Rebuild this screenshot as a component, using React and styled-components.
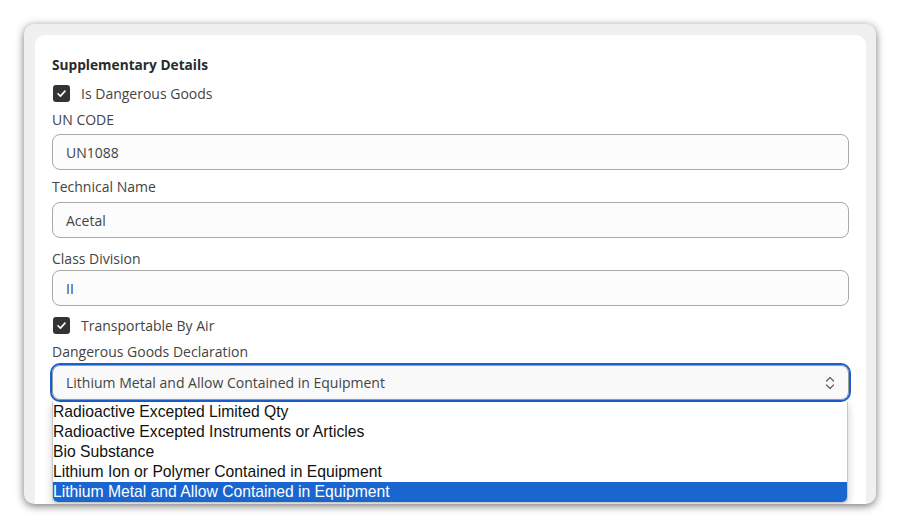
import React from "react";
import styled, { createGlobalStyle } from "styled-components";

const Global = createGlobalStyle`
  html, body { margin: 0; padding: 0; background: #ffffff; }
  body { font-family: "Open Sans", "Noto Sans", sans-serif; color: #333; }
`;

const Page = styled.div`
  width: 900px;
  height: 530px;
  padding: 24px 24px 0 24px;
  box-sizing: border-box;
`;

const Frame = styled.div`
  width: 852px;
  height: 480px;
  background: #f0f0f0;
  border-radius: 10px;
  box-shadow: 0 2px 9px rgba(0, 0, 0, 0.55);
  overflow: hidden;
  padding: 11px 10px 0 11px;
  box-sizing: border-box;
`;

const Card = styled.div`
  background: #ffffff;
  border-radius: 10px;
  height: 520px;
  padding: 20px 17px 0 17px;
  box-sizing: border-box;
  display: flex;
  flex-direction: column;
`;

const Title = styled.div`
  font-size: 13.7px;
  font-weight: 700;
  color: #2a2a2a;
  line-height: 20px;
`;

const CheckRow = styled.label`
  display: flex;
  align-items: center;
  gap: 11px;
  height: 20px;
  margin-top: ${(p) => p.$mt || 0}px;
  margin-left: 1px;
  font-size: 14px;
  color: #444;
`;

const Box = styled.span`
  width: 17px;
  height: 17px;
  border-radius: 3px;
  background: #333333;
  display: flex;
  align-items: center;
  justify-content: center;
`;

const Label = styled.div`
  font-size: 14px;
  color: #444;
  line-height: 20px;
  margin-top: ${(p) => p.$mt || 0}px;
  margin-bottom: ${(p) => p.$mb || 0}px;
`;

const Input = styled.div`
  height: 36px;
  box-sizing: border-box;
  border: 1px solid #a8a8a8;
  border-radius: 8px;
  background: #fcfcfc;
  display: flex;
  align-items: center;
  padding: 0 13px;
  font-size: 14px;
  color: #444;
`;

const SelectWrap = styled.div`
  position: relative;
  margin-top: 3px;
`;

const Select = styled.div`
  height: 35px;
  box-sizing: border-box;
  border: 1px solid #9a9a9a;
  border-radius: 8px;
  background: #f9f9f9;
  outline: 2px solid #1a5fd0;
  outline-offset: 0px;
  display: flex;
  align-items: center;
  justify-content: space-between;
  padding: 0 13px;
  font-size: 14px;
  color: #444;
`;

const List = styled.div`
  position: absolute;
  left: 0;
  right: 1px;
  top: 37px;
  background: #ffffff;
  border: 1px solid #c8c8c8;
  border-top: none;
  border-radius: 0 0 6px 6px;
  box-shadow: 0 3px 8px rgba(0, 0, 0, 0.2);
  overflow: hidden;
  font-family: "Liberation Sans", Arial, sans-serif;
  font-size: 15.7px;
`;

const Option = styled.div`
  height: 20px;
  line-height: 20px;
  color: ${(p) => (p.$sel ? "#ffffff" : "#111")};
  background: ${(p) => (p.$sel ? "#1a66d1" : "transparent")};
`;

const Check = () => (
  <svg width="11" height="11" viewBox="0 0 12 12">
    <path d="M2.2 6.3 L4.8 8.8 L9.8 3.4" fill="none" stroke="#fff" strokeWidth="1.8" strokeLinecap="round" strokeLinejoin="round" />
  </svg>
);

const Chevron = () => (
  <svg width="10" height="14" viewBox="0 0 10 14">
    <path d="M1.5 5 L5 1.5 L8.5 5 M1.5 9 L5 12.5 L8.5 9" fill="none" stroke="#666" strokeWidth="1.3" strokeLinecap="round" strokeLinejoin="round" />
  </svg>
);

const options = [
  "Radioactive Excepted Limited Qty",
  "Radioactive Excepted Instruments or Articles",
  "Bio Substance",
  "Lithium Ion or Polymer Contained in Equipment",
  "Lithium Metal and Allow Contained in Equipment",
];

export default function App() {
  return (
    <>
      <Global />
      <Page>
        <Frame>
          <Card>
            <Title>Supplementary Details</Title>
            <CheckRow $mt={8}>
              <Box><Check /></Box>
              Is Dangerous Goods
            </CheckRow>
            <Label $mt={7} $mb={4}>UN CODE</Label>
            <Input>UN1088</Input>
            <Label $mt={7} $mb={5}>Technical Name</Label>
            <Input>Acetal</Input>
            <Label $mt={11} $mb={1}>Class Division</Label>
            <Input>II</Input>
            <CheckRow $mt={9}>
              <Box><Check /></Box>
              Transportable By Air
            </CheckRow>
            <Label $mt={7}>Dangerous Goods Declaration</Label>
            <SelectWrap>
              <Select>
                <span>Lithium Metal and Allow Contained in Equipment</span>
                <Chevron />
              </Select>
              <List>
                {options.map((o, i) => (
                  <Option key={o} $sel={i === options.length - 1}>{o}</Option>
                ))}
              </List>
            </SelectWrap>
          </Card>
        </Frame>
      </Page>
    </>
  );
}
